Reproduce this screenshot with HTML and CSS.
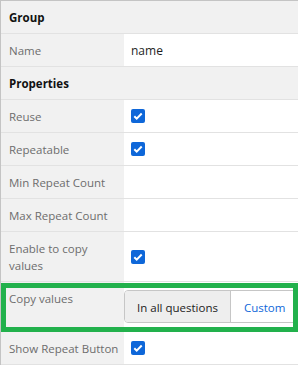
FILE: index.html
```html
<!DOCTYPE html>
<html>
<head>
    <title>Group Properties</title>
    <link rel="stylesheet" href="styles.css">
</head>
<body>
    <div class="grid">
        <div class="section">Group</div>

        <div class="row">
            <div class="label">Name</div>
            <div class="value"><span class="text-value">name</span></div>
        </div>

        <div class="section">Properties</div>

        <div class="row">
            <div class="label">Reuse</div>
            <div class="value"><span class="check"><svg width="14" height="14" viewBox="0 0 14 14"><path d="M3.3 7.2l2.4 2.4 5-5.1" fill="none" stroke="#fff" stroke-width="2"/></svg></span></div>
        </div>
        <div class="row">
            <div class="label">Repeatable</div>
            <div class="value"><span class="check"><svg width="14" height="14" viewBox="0 0 14 14"><path d="M3.3 7.2l2.4 2.4 5-5.1" fill="none" stroke="#fff" stroke-width="2"/></svg></span></div>
        </div>
        <div class="row">
            <div class="label">Min Repeat Count</div>
            <div class="value"></div>
        </div>
        <div class="row">
            <div class="label">Max Repeat Count</div>
            <div class="value"></div>
        </div>
        <div class="row">
            <div class="label">Enable to copy values</div>
            <div class="value"><span class="check"><svg width="14" height="14" viewBox="0 0 14 14"><path d="M3.3 7.2l2.4 2.4 5-5.1" fill="none" stroke="#fff" stroke-width="2"/></svg></span></div>
        </div>
        <div class="row row-top highlighted">
            <div class="label">Copy values</div>
            <div class="value value-flush">
                <div class="segmented">
                    <span class="segment selected">In all questions</span>
                    <span class="segment">Custom</span>
                </div>
            </div>
            <div class="highlight-box"></div>
        </div>
        <div class="row">
            <div class="label">Show Repeat Button</div>
            <div class="value"><span class="check"><svg width="14" height="14" viewBox="0 0 14 14"><path d="M3.3 7.2l2.4 2.4 5-5.1" fill="none" stroke="#fff" stroke-width="2"/></svg></span></div>
        </div>
    </div>
</body>
</html>
```

FILE: styles.css
```css
body {
    margin: 0;
    font-family: "Open Sans", "Noto Sans", sans-serif;
    font-size: 11.5px;
    background: #fff;
    overflow: hidden;
}
.grid {
    border-top: 1px solid #c4c4c4;
    border-left: 1px solid #c4c4c4;
    height: 364px;
    overflow: hidden;
}
.section {
    height: 32px;
    line-height: 33px;
    padding-left: 8px;
    background-color: #f1f1f1;
    border-bottom: 1px solid #e2e2e2;
    font-weight: bold;
    color: #111;
}
.row {
    display: grid;
    grid-template-columns: 123px 1fr;
    border-bottom: 1px solid #e2e2e2;
    min-height: 32px;
}
.label {
    background-color: #f1f1f1;
    color: #6d6d6d;
    padding: 8px 3px 7px 8px;
    line-height: 17px;
    display: flex;
    align-items: center;
}
.row-top .label {
    align-items: flex-start;
}
.value {
    display: flex;
    align-items: center;
    padding: 0 7px;
    overflow: hidden;
}
.value-flush {
    padding: 8px 0;
}
.text-value {
    color: #1e1e1e;
    font-size: 12px;
    padding-top: 1px;
}
.check {
    display: inline-block;
    width: 14px;
    height: 14px;
    border-radius: 2px;
    background-color: #0e67d9;
}
.check svg {
    display: block;
}
.segmented {
    display: flex;
    height: 31px;
    border: 1px solid #c6c6c6;
    border-radius: 4px;
    white-space: nowrap;
    flex-shrink: 0;
}
.segment {
    display: flex;
    align-items: center;
    padding: 1px 13px 0;
    color: #0e67d9;
    font-size: 11.5px;
}
.segment.selected {
    background-color: #eeeeee;
    color: #222;
    border-right: 1px solid #c6c6c6;
    border-radius: 3px 0 0 3px;
    padding: 1px 12px 0;
}
.highlighted {
    position: relative;
}
.highlight-box {
    position: absolute;
    top: 1px;
    left: 0;
    right: 0;
    bottom: -1px;
    border: 5px solid #22b14c;
}
```
